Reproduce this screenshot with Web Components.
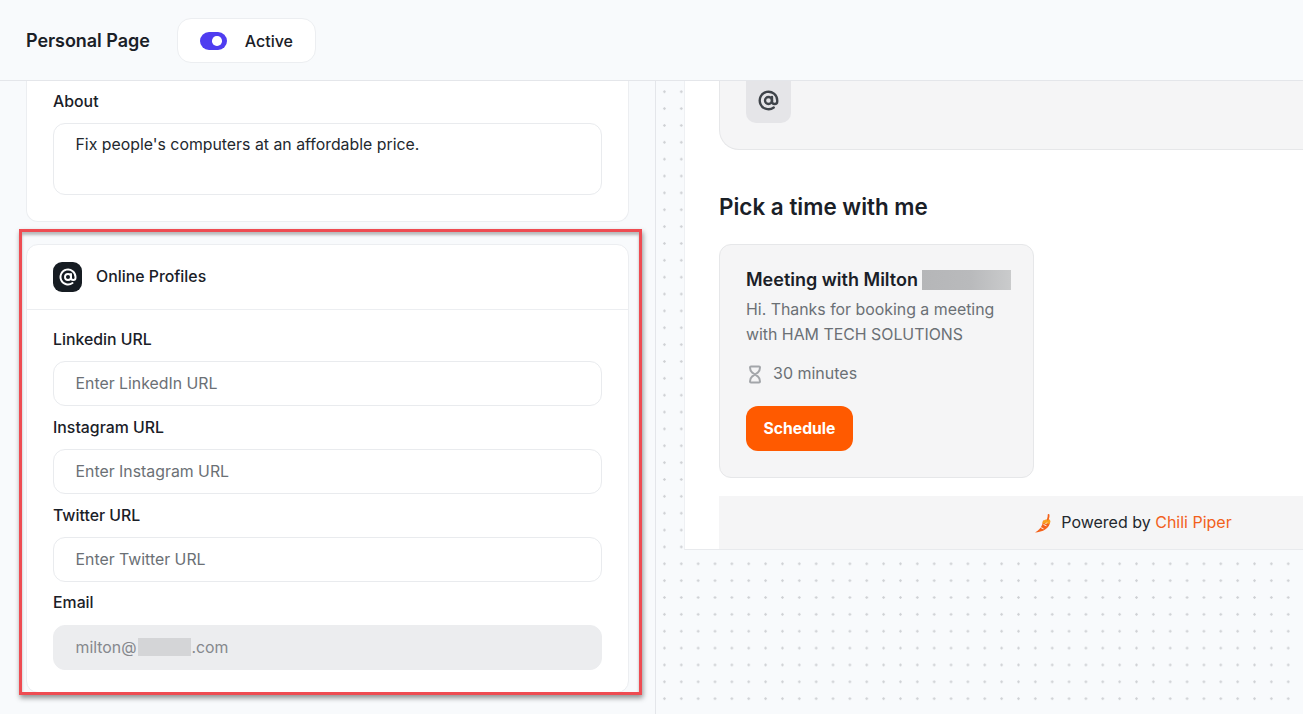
<!DOCTYPE html>
<html lang="en">
<head>
<meta charset="utf-8">
<title>Personal Page</title>
<style>
  html, body { margin: 0; height: 100%; }
  body { font-family: Inter, "Liberation Sans", sans-serif; color: #1a2027; overflow: hidden; }
</style>
</head>
<body>
<personal-page-app></personal-page-app>
<script>
const AT_PATHS = `<circle cx="12" cy="12" r="4"/><path d="M16 8v5a3 3 0 0 0 6 0v-1a10 10 0 1 0-4 8"/>`;

class ToggleSwitch extends HTMLElement {
  constructor() {
    super();
    this.attachShadow({mode: 'open'}).innerHTML = `
      <style>
        :host { display: flex; align-items: center; gap: 18px; height: 45px; padding: 0 22px; box-sizing: border-box;
          background: #fff; border: 1px solid #eceef1; border-radius: 14px; }
        .track { width: 27px; height: 18px; border-radius: 9px; background: #4f3df0; position: relative; }
        .knob { position: absolute; right: 5px; top: 4.5px; width: 9.5px; height: 9.5px; border-radius: 50%; background: #fff; }
        .label { font-size: 16px; font-weight: 500; line-height: 20px; }
      </style>
      <div class="track"><div class="knob"></div></div>
      <div class="label"><slot></slot></div>
    `;
  }
}
customElements.define('toggle-switch', ToggleSwitch);

class AppHeader extends HTMLElement {
  constructor() {
    super();
    this.attachShadow({mode: 'open'}).innerHTML = `
      <style>
        :host { display: flex; align-items: center; gap: 27px; height: 81px; box-sizing: border-box; padding: 1px 26px 0;
          background: #f8fafc; border-bottom: 1px solid #e4e6ea; flex: none; }
        h1 { margin: 0; font-size: 18px; font-weight: 600; line-height: 24px; letter-spacing: -.05px; }
      </style>
      <h1><slot></slot></h1>
      <toggle-switch>Active</toggle-switch>
    `;
  }
}
customElements.define('app-header', AppHeader);

class FormField extends HTMLElement {
  constructor() {
    super();
    const multi = this.hasAttribute('multiline');
    const disabled = this.hasAttribute('disabled');
    const filled = this.hasAttribute('filled');
    this.attachShadow({mode: 'open'}).innerHTML = `
      <style>
        :host { display: block; }
        .label { font-size: 15.85px; font-weight: 500; line-height: 20px;
          margin: var(--label-lift, 0) 0 calc(11px - var(--label-lift, 0px)); }
        .box { box-sizing: border-box; height: ${multi ? 72 : 45}px; padding: ${multi ? 11 : 12}px 21.5px 0;
          border: 1px solid ${disabled ? '#ecedef' : '#e9ebee'}; border-radius: 12px;
          background: ${disabled ? '#ecedef' : '#fff'}; font-size: 15.85px; line-height: 20px;
          color: ${disabled ? '#85888d' : filled ? '#23282e' : '#6b7075'}; }
      </style>
      <div class="label">${this.getAttribute('label')}</div>
      <div class="box"><slot></slot></div>
    `;
  }
}
customElements.define('form-field', FormField);

class FormCard extends HTMLElement {
  constructor() {
    super();
    const title = this.getAttribute('heading');
    const clipped = this.hasAttribute('clipped');
    this.attachShadow({mode: 'open'}).innerHTML = `
      <style>
        :host { display: block; background: #fff; border: 1px solid #eceef1; box-sizing: border-box;
          border-radius: ${clipped ? '0 0 12px 12px' : '12px'}; ${clipped ? 'border-top: none;' : ''} }
        header { display: flex; align-items: center; gap: 14px; height: 65px; box-sizing: border-box; padding: 0 26px; border-bottom: 1px solid #eceef1; }
        .tile { width: 29px; height: 30px; border-radius: 9px; background: #161c22; display: flex; align-items: center; justify-content: center; }
        svg { width: 18px; height: 18px; fill: none; stroke: #fff; stroke-width: 2.6; stroke-linecap: round; stroke-linejoin: round; }
        h2 { margin: 0 0 1px; font-size: 15.85px; font-weight: 500; line-height: 20px; }
        .body { display: flex; flex-direction: column; gap: 12px; padding: ${clipped ? '11px 26px 26px' : '20px 26px 22px'}; }
      </style>
      ${title ? `<header><div class="tile"><svg viewBox="0 0 24 24">${AT_PATHS}</svg></div><h2>${title}</h2></header>` : ''}
      <div class="body"><slot></slot></div>
    `;
  }
}
customElements.define('form-card', FormCard);

class MeetingCard extends HTMLElement {
  constructor() {
    super();
    this.attachShadow({mode: 'open'}).innerHTML = `
      <style>
        :host { display: block; width: 315px; height: 234px; box-sizing: border-box; padding: 22px 26px 0;
          background: #f5f5f6; border: 1px solid #e6e7e9; border-radius: 12px; }
        .title { display: flex; align-items: center; gap: 4px; font-size: 18px; font-weight: 600; line-height: 26px; white-space: nowrap; }
        .blur { flex: none; width: 89px; height: 20px; background: linear-gradient(90deg, #b5b6b8, #b9babc 55%, #cacbcc); }
        p { margin: 4px 0 0; font-size: 15.9px; line-height: 25px; color: #6b7075; letter-spacing: -.01px; }
        .time { display: flex; align-items: center; gap: 11px; margin-top: 13px; height: 25px; font-size: 16px; color: #6b7075; }
        .time svg { width: 16px; height: 19px; fill: none; stroke: #a3a6aa; stroke-width: 2; stroke-linejoin: round; stroke-linecap: round; position: relative; top: 2px; }
        .btn { margin-top: 21px; width: 107px; height: 45px; border-radius: 12px; background: #ff5a00; color: #fff;
          display: flex; align-items: center; justify-content: center; font-size: 15.7px; font-weight: 700; padding-bottom: 1px; box-sizing: border-box; }
      </style>
      <div class="title"><span><slot name="title"></slot></span><div class="blur"></div></div>
      <p><slot></slot></p>
      <div class="time">
        <svg viewBox="0 0 16 19"><path d="M5 1.500h8c.6 0 1 .4 1 1 0 2.200-.9 4-2.300 5.200L9 9.500l-2.700-1.800C4.900 6.500 4 4.700 4 2.500c0-.6.400-1 1-1zM9 9.500l2.700 1.800c1.400 1.200 2.300 3 2.300 5.200 0 .6-.4 1-1 1H5c-.6 0-1-.4-1-1 0-2.200.9-4 2.300-5.200z"/></svg>
        <span><slot name="time"></slot></span>
      </div>
      <div class="btn"><slot name="action"></slot></div>
    `;
  }
}
customElements.define('meeting-card', MeetingCard);

class PoweredBy extends HTMLElement {
  constructor() {
    super();
    this.attachShadow({mode: 'open'}).innerHTML = `
      <style>
        :host { display: flex; align-items: center; justify-content: center; gap: 8px; height: 53px; box-sizing: border-box; padding-bottom: 2px; background: #f5f5f6;
          font-size: 16px; color: #23282e; }
        svg { width: 18px; height: 19px; position: relative; top: 2px; }
      </style>
      <svg viewBox="0 0 18 19">
        <path fill="#f4621a" d="M0 18.500c3.500-.2 7.500-1 10.500-3.200 2.700-2 4.500-4.500 4.700-7.800L8 6.500C7.800 9.500 6.800 12.500 4.500 15 3.200 16.400 1.500 17.500 0 18.500z"/>
        <path fill="#f9a11f" d="M7.500 8c1.300-2.200 3.800-3.300 6.200-2.700 1.300.3 1.900 1.300 1.600 2.700l-.5 1.700-7-.2z"/>
        <path fill="none" stroke="#f4621a" stroke-width="1.800" stroke-linecap="round" d="M12.800 5.500c.6-1.500 1-2.800.8-4.500"/>
        <path fill="none" stroke="#fff" stroke-width=".9" d="M5.500 13.500l3 1.300M8.500 10.500l3 1.300M12 8.500l-1.500 1.500"/>
      </svg>
      <span><slot></slot></span>
    `;
  }
}
customElements.define('powered-by', PoweredBy);

class BookingPreview extends HTMLElement {
  constructor() {
    super();
    this.attachShadow({mode: 'open'}).innerHTML = `
      <style>
        :host { display: block; flex: none; height: 469px; margin-left: 28px; overflow: hidden; box-sizing: border-box;
          background: #fff; border-bottom: 1px solid #e8eaed; border-left: 1px solid #eef0f3; padding-left: 34px; }
        .inner { width: 829px; }
        .profile { height: 69px; box-sizing: border-box; padding: 0 26px 27px; background: #f5f5f6;
          border: 1px solid #e6e7e9; border-top: none; border-radius: 0 0 20px 20px; }
        .tile { width: 45px; height: 42px; box-sizing: border-box; padding-bottom: 4px; border-radius: 0 0 10px 10px; background: #e5e5e8; display: flex; align-items: center; justify-content: center; }
        .tile svg { width: 21px; height: 21px; fill: none; stroke: #3f444a; stroke-width: 2.700; stroke-linecap: round; stroke-linejoin: round; }
        h2 { margin: 42px 0 22px; font-size: 22.45px; font-weight: 600; line-height: 30px; }
        powered-by { margin-top: 18px; }
      </style>
      <div class="inner">
        <div class="profile"><div class="tile"><svg viewBox="0 0 24 24">${AT_PATHS}</svg></div></div>
        <h2><slot name="heading"></slot></h2>
        <slot></slot>
        <powered-by><slot name="footer"></slot></powered-by>
      </div>
    `;
  }
}
customElements.define('booking-preview', BookingPreview);

class PersonalPageApp extends HTMLElement {
  constructor() {
    super();
    this.attachShadow({mode: 'open'}).innerHTML = `
      <style>
        :host { display: flex; flex-direction: column; width: 1303px; height: 714px; overflow: hidden; position: relative; background: #f8fafc; }
        main { flex: 1; display: flex; min-height: 0; }
        .left { width: 656px; flex: none; box-sizing: border-box; padding: 0 26px; border-right: 1px solid #e4e6ea;
          display: flex; flex-direction: column; gap: 22px; overflow: hidden; }
        .right { flex: 1; min-width: 0; overflow: hidden;
          background-image: radial-gradient(circle at center, #cdd0d4 0, #d3d5d8 1px, transparent 1.500px);
          background-size: 16.870px 16.870px; background-position: 0 2.300px; }
        .mark { position: absolute; left: 19px; top: 229px; width: 623px; height: 466px; box-sizing: border-box;
          border: 3.500px solid #ee4c52; box-shadow: 1px 3px 5px rgba(0,0,0,.42), inset 0 3px 3px rgba(0,0,0,.26); pointer-events: none; }
        .blur { display: inline-block; width: 53px; height: 18px; margin-left: 2px; background: #d4d5d7; vertical-align: -3px; }
        .email { --label-lift: -1px; }
      </style>
      <app-header>Personal Page</app-header>
      <main>
        <section class="left">
          <form-card clipped>
            <form-field label="About" multiline filled>Fix people's computers at an affordable price.</form-field>
          </form-card>
          <form-card heading="Online Profiles">
            <form-field label="Linkedin URL">Enter LinkedIn URL</form-field>
            <form-field label="Instagram URL">Enter Instagram URL</form-field>
            <form-field label="Twitter URL">Enter Twitter URL</form-field>
            <form-field class="email" label="Email" disabled>milton@<span class="blur"></span>.com</form-field>
          </form-card>
        </section>
        <section class="right">
          <booking-preview>
            <span slot="heading">Pick a time with me</span>
            <meeting-card>
              <span slot="title">Meeting with Milton</span>
              Hi. Thanks for booking a meeting<br>with HAM TECH SOLUTIONS
              <span slot="time">30 minutes</span>
              <span slot="action">Schedule</span>
            </meeting-card>
            <span slot="footer">Powered by <span style="color:#f2611c">Chili Piper</span></span>
          </booking-preview>
        </section>
      </main>
      <div class="mark"></div>
    `;
  }
}
customElements.define('personal-page-app', PersonalPageApp);
</script>
</body>
</html>
